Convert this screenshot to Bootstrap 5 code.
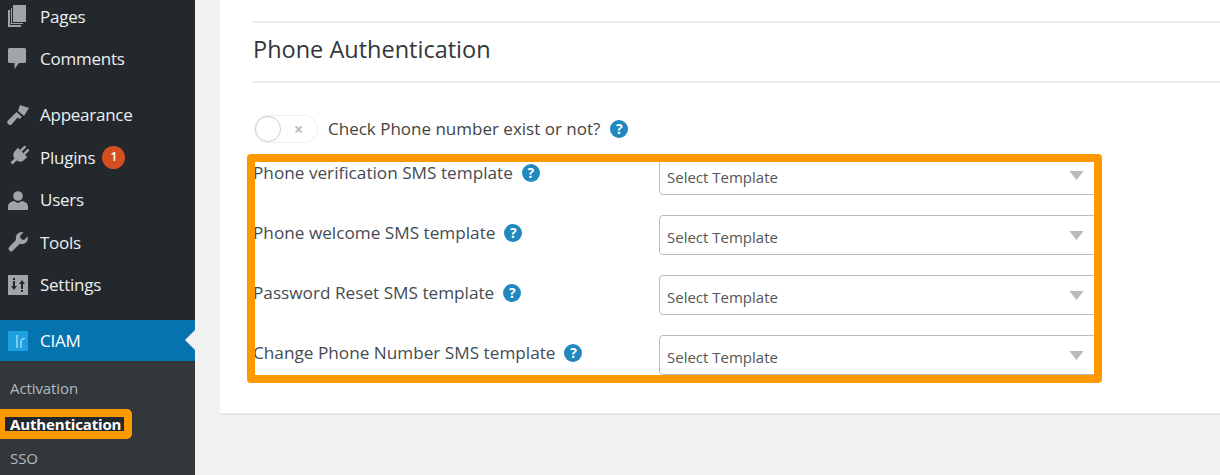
<!DOCTYPE html>
<html lang="en">
<head>
<meta charset="utf-8">
<title>Phone Authentication</title>
<link href="https://cdn.jsdelivr.net/npm/bootstrap@5.3.0/dist/css/bootstrap.min.css" rel="stylesheet">
<style>
html,body{height:475px;overflow:hidden;background:#f1f1f1;font-family:"Open Sans","Noto Sans",sans-serif}
.shell{height:475px;overflow:hidden}
.side{width:195px;background:#23282d;flex:none;height:475px}
.menu-list{margin:-5px 0 0;padding:0;list-style:none}
.menu-row{height:42.5px;color:#eceeef;font-size:17px;letter-spacing:-.25px;padding-left:8px;gap:12px}
.menu-row svg{width:20px;height:20px;flex:none;fill:#a0a5aa;overflow:visible}
.gap-row{margin-top:13.5px}
.count{width:23px;height:23px;border-radius:50%;background:#d54e21;color:#fff;font-size:12px;font-weight:600;margin-left:-5px}
.cur-row{margin-top:14px;height:41px;background:#0574ae;color:#fff;position:relative}
.cur-row::after{content:"";position:absolute;right:0;top:10px;border:10.5px solid transparent;border-right-color:#f1f1f1;border-left:0}
.sub-list{background:#32373c;height:114px;padding-top:10px}
.sub-item{color:#b4b9be;font-size:15px;padding-left:10px;height:35px;letter-spacing:-.1px}
.sub-hi{width:132px;height:30px;background:#23282d;border:solid #ff9900;border-width:8px 8px 8px 5px;border-radius:0 5px 5px 0;color:#fff;font-weight:700;font-size:15px;padding-left:5px;margin:3px 0 2px;letter-spacing:-.15px}
.stage{flex:1;min-width:0;padding-left:25px}
.sheet{position:relative;height:415px;background:#fff;border-bottom:2px solid #e8e8e8;padding:21px 0 0 33px}
.rule{height:2px;background:#ededed}
.sheet-title{font-size:23.5px;font-weight:500;color:#32373c;line-height:52px;height:58px;margin:0}
.switch-row{margin-top:32px;height:28px;gap:10px;color:#444;font-size:17px;margin-left:1px}
.toggle-pill{width:64px;height:28px;border-radius:14px;border:1px solid #eee;background:#fff;position:relative;flex:none}
.toggle-knob{position:absolute;left:0;top:0;width:26px;height:26px;border-radius:50%;background:#fff;border:1px solid #ccc}
.toggle-x{position:absolute;left:39px;top:6px;color:#bbb;font-size:16px;line-height:14px;font-weight:700}
.help{width:18px;height:18px;border-radius:50%;background:#2188c0;color:#fff;font-size:14px;font-weight:700;line-height:1;flex:none}
.tpl-rows{margin-top:12px;gap:20px}
.tpl-row{height:40px}
.tpl-label{width:406px;flex:none;height:36px;gap:9px;color:#444b52;font-size:17.2px}
.form-select.tpl-select{width:441px;height:40px;border:1px solid #bbb;border-radius:4px;padding:5px 30px 0 7px;font-size:15px;color:#555;font-family:inherit;background-size:15px 9px;background-position:right 15px top 15px;background-image:url("data:image/svg+xml,%3Csvg xmlns='http://www.w3.org/2000/svg' viewBox='0 0 16 10'%3E%3Cpath fill='%23bbb' d='M0 0h16L8 10z'/%3E%3C/svg%3E")}
.callout{position:absolute;left:27px;top:154px;width:855px;height:229px;border:8px solid #ff9900;border-radius:4px;pointer-events:none}
</style>
</head>
<body>
<div class="shell d-flex">
  <aside class="side">
    <ul class="menu-list">
      <li class="menu-row d-flex align-items-center"><svg viewBox="0 0 20 20"><path d="M5 -1h13v17H5z"/><path d="M3 2h1v15h11v1H3z"/><path d="M0 4h2v15h11v2H0z"/></svg>Pages</li>
      <li class="menu-row d-flex align-items-center"><svg viewBox="0 0 20 20"><path d="M1.500 -1h15a1.500 1.500 0 0 1 1.500 1.500v12a1.500 1.500 0 0 1-1.500 1.500H11l-4.500 6V14h-5A1.500 1.500 0 0 1 0 12.500V.5A1.500 1.500 0 0 1 1.500 -1z"/></svg>Comments</li>
      <li class="menu-row gap-row d-flex align-items-center"><svg viewBox="0 0 20 20"><path d="M12 0l9 3-5 8-6-5z"/><path d="M8.500 7L14 12l-2.500 2-2-1.500L4 19a2.500 2.500 0 0 1-4-3.500L6 9.500z"/></svg>Appearance</li>
      <li class="menu-row d-flex align-items-center"><svg viewBox="0 0 20 20"><g transform="rotate(45 10 10)"><rect x="6.500" y="-3" width="2.400" height="7" rx="1"/><rect x="11.100" y="-3" width="2.400" height="7" rx="1"/><path d="M3.500 3.500h13v4c0 3.500-2.500 5.500-5 6V19h-3v-5.500c-2.500-.5-5-2.500-5-6z"/></g></svg>Plugins<span class="count d-flex align-items-center justify-content-center">1</span></li>
      <li class="menu-row d-flex align-items-center"><svg viewBox="0 0 20 20"><circle cx="10" cy="6" r="4.800"/><path d="M0 20v-3.500c0-3 3-5 6-5.500l4 2 4-2c3 .5 6 2.500 6 5.500V20z"/></svg>Users</li>
      <li class="menu-row d-flex align-items-center"><svg viewBox="0 0 20 20"><path d="M13.500 0a6 6 0 0 1 2 .3L12 4l1 3 3 1 3.600-3.500a6 6 0 0 1-7.800 7.300L5 18.500a2.600 2.600 0 0 1-3.700-3.700l6.700-6.700A6 6 0 0 1 13.500 0z"/></svg>Tools</li>
      <li class="menu-row d-flex align-items-center"><svg viewBox="0 0 20 20"><path fill-rule="evenodd" d="M0 0h20v20H0zM5 6v5H3l3 4 3-4H7V6zM5 3v2h2V3zM13 14V9h-2l3-4 3 4h-2v5zM13 15v2h2v-2z"/></svg>Settings</li>
      <li class="menu-row cur-row d-flex align-items-center"><svg viewBox="0 0 20 20"><rect width="20" height="20" rx="1" fill="#1e9fe0"/><path d="M9 4v13M13 17v-7c0-1.500 1.500-2.500 4-2.500" fill="none" stroke="#bfe4f7" stroke-width="1.200"/></svg>CIAM</li>
    </ul>
    <div class="sub-list">
      <div class="sub-item d-flex align-items-center">Activation</div>
      <div class="sub-hi d-flex align-items-center">Authentication</div>
      <div class="sub-item d-flex align-items-center">SSO</div>
    </div>
  </aside>
  <main class="stage">
    <section class="sheet">
      <div class="rule"></div>
      <h2 class="sheet-title">Phone Authentication</h2>
      <div class="rule"></div>
      <div class="switch-row d-flex align-items-center">
        <span class="toggle-pill"><span class="toggle-knob"></span><span class="toggle-x">×</span></span>
        <span>Check Phone number exist or not?</span>
        <span class="help d-flex align-items-center justify-content-center">?</span>
      </div>
      <div class="tpl-rows d-flex flex-column">
        <div class="tpl-row d-flex">
          <label class="tpl-label d-flex align-items-center">Phone verification SMS template <span class="help d-flex align-items-center justify-content-center">?</span></label>
          <select class="form-select tpl-select"><option>Select Template</option></select>
        </div>
        <div class="tpl-row d-flex">
          <label class="tpl-label d-flex align-items-center">Phone welcome SMS template <span class="help d-flex align-items-center justify-content-center">?</span></label>
          <select class="form-select tpl-select"><option>Select Template</option></select>
        </div>
        <div class="tpl-row d-flex">
          <label class="tpl-label d-flex align-items-center">Password Reset SMS template <span class="help d-flex align-items-center justify-content-center">?</span></label>
          <select class="form-select tpl-select"><option>Select Template</option></select>
        </div>
        <div class="tpl-row d-flex">
          <label class="tpl-label d-flex align-items-center">Change Phone Number SMS template <span class="help d-flex align-items-center justify-content-center">?</span></label>
          <select class="form-select tpl-select"><option>Select Template</option></select>
        </div>
      </div>
      <div class="callout"></div>
    </section>
  </main>
</div>
<script src="https://cdn.jsdelivr.net/npm/bootstrap@5.3.0/dist/js/bootstrap.bundle.min.js"></script>
</body>
</html>
